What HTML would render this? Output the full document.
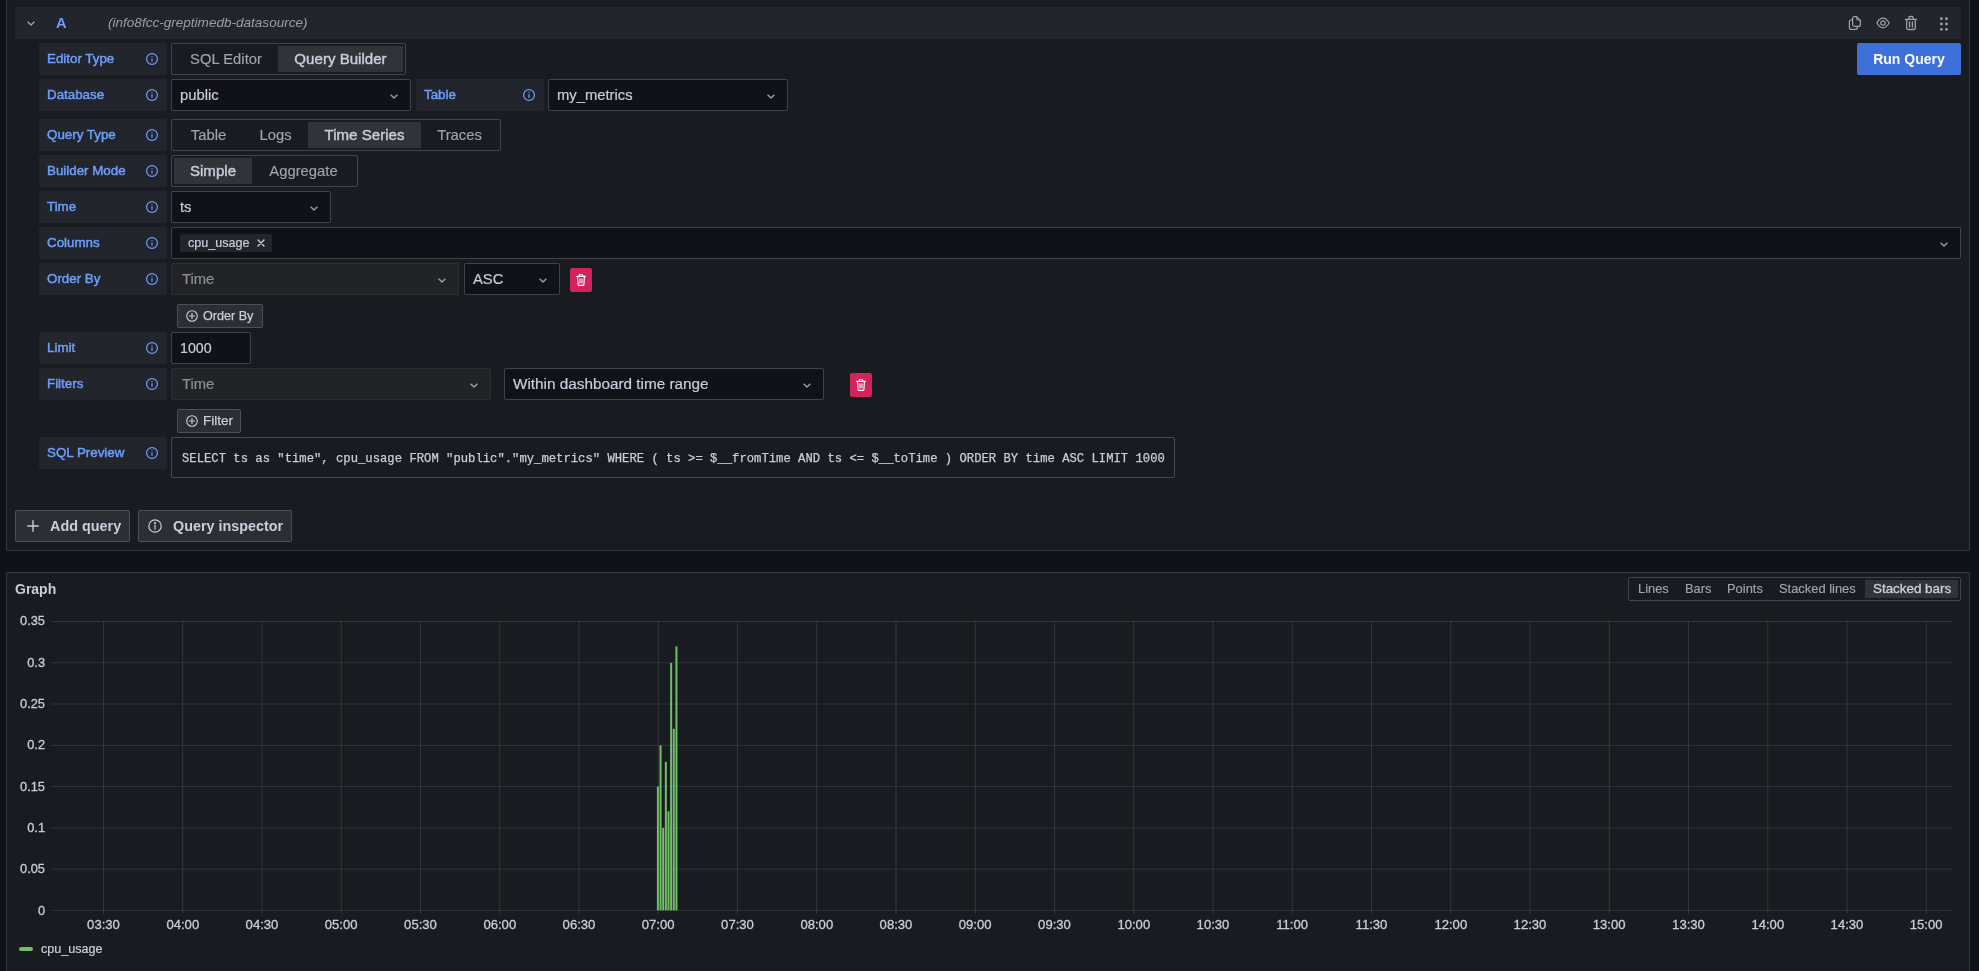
<!DOCTYPE html><html><head><meta charset="utf-8"><style>
*{box-sizing:border-box;margin:0;padding:0}
html,body{width:1979px;height:971px;overflow:hidden;background:#111217;font-family:"Liberation Sans",sans-serif;color:#ccccdc}
.abs{position:absolute}
.panel{position:absolute;background:#181b1f;border:1px solid rgba(204,204,220,0.17);border-radius:2px}
.lbl{position:absolute;left:39px;width:128px;height:32px;background:#22252b;border-radius:2px;color:#6e9fff;font-size:13.35px;line-height:32px;padding-left:8px;-webkit-text-stroke:0.45px #6e9fff;white-space:nowrap}
.lbl .ic{position:absolute;right:9px;top:10px}
.inp{position:absolute;height:32px;background:#111217;border:1px solid rgba(204,204,220,0.26);border-radius:2px;font-size:14.8px;line-height:30px;padding-left:8px;color:#ccccdc;white-space:nowrap;-webkit-text-stroke:0.2px currentColor}
.dis{background:#212327;border-color:rgba(204,204,220,0.07);color:#8e8e96;padding-left:10px}
.chev{position:absolute;top:12px}
.rg{position:absolute;height:32px;border:1px solid rgba(204,204,220,0.24);border-radius:2px;padding:2px}
.rb{position:absolute;top:2px;height:26px;line-height:26px;font-size:14.8px;color:#a3a3ad;white-space:nowrap;border-radius:2px;text-align:center;-webkit-text-stroke:0.15px currentColor}
.rb.on{border-radius:0;background:#313338;color:#ccccdc;font-size:15.1px;-webkit-text-stroke:0.4px #ccccdc}
.btn2{position:absolute;background:#2c2e33;border:1px solid rgba(204,204,220,0.22);border-radius:2px;color:#ccccdc;white-space:nowrap}
.del{position:absolute;width:22px;height:24px;background:#d3235c;border-radius:2px}
.mono{font-family:"Liberation Mono",monospace}
</style></head><body><div id="root" style="position:absolute;left:0;top:0;width:1979px;height:971px;will-change:transform">
<div class="panel" style="left:6px;top:-1px;width:1964px;height:552px"></div>
<div class="abs" style="left:15px;top:7px;width:1946px;height:32px;background:#22252b;border-radius:2px"></div>
<svg class="abs" style="left:25.8px;top:19.5px" width="10" height="7" viewBox="0 0 10 7"><path d="M1.9 2.1 L5 5.1 L8.1 2.1" fill="none" stroke="#a0a1ab" stroke-width="1.35" stroke-linecap="round" stroke-linejoin="round"/></svg>
<div class="abs" style="left:56px;top:7px;line-height:32px;font-size:14.6px;font-weight:700;color:#6e9fff">A</div>
<div class="abs" style="left:108px;top:7px;line-height:32px;font-size:13.55px;font-style:italic;color:#9d9da8">(info8fcc-greptimedb-datasource)</div>
<svg class="abs" style="left:1848px;top:15px" width="14" height="16" viewBox="0 0 14 16" fill="none" stroke="#a0a1ab" stroke-width="1.2" stroke-linejoin="round"><path d="M6.6 1.6 H8.6 L12.4 5.4 V9.4 A2 2 0 0 1 10.4 11.4 H6.6 A2 2 0 0 1 4.6 9.4 V3.6 A2 2 0 0 1 6.6 1.6 Z"/><path d="M8.8 2 V3.8 A1.2 1.2 0 0 0 10 5 H12"/><path d="M4.4 4.8 H3.4 A2 2 0 0 0 1.4 6.8 V12.4 A2 2 0 0 0 3.4 14.4 H7.4 A2 2 0 0 0 9.4 12.4 V11.6"/></svg>
<svg class="abs" style="left:1876px;top:17px" width="14" height="12" viewBox="0 0 14 12" fill="none" stroke="#a0a1ab" stroke-width="1.2"><path d="M0.9 6 C2.8 2.6 4.9 1.2 7 1.2 C9.1 1.2 11.2 2.6 13.1 6 C11.2 9.4 9.1 10.8 7 10.8 C4.9 10.8 2.8 9.4 0.9 6 Z"/><circle cx="7" cy="6" r="2.2"/></svg>
<svg class="abs" style="left:1904px;top:15px" width="14" height="16" viewBox="0 0 14 16" fill="none" stroke="#a0a1ab" stroke-width="1.3" stroke-linecap="round"><path d="M1.4 4.4 H12.6 M4.9 4.2 V2.7 Q4.9 1.5 6.1 1.5 H7.9 Q9.1 1.5 9.1 2.7 V4.2 M2.7 4.8 V13 A1.5 1.5 0 0 0 4.2 14.5 H9.8 A1.5 1.5 0 0 0 11.3 13 V4.8 M5.6 7 V12 M8.4 7 V12"/></svg>
<svg class="abs" style="left:1939px;top:17px" width="10" height="14" viewBox="0 0 10 14" fill="#a0a1ab"><circle cx="2.4" cy="1.7" r="1.4"/><circle cx="7.5" cy="1.7" r="1.4"/><circle cx="2.4" cy="6.9" r="1.4"/><circle cx="7.5" cy="6.9" r="1.4"/><circle cx="2.4" cy="12.3" r="1.4"/><circle cx="7.5" cy="12.3" r="1.4"/></svg>
<div class="abs" style="left:1857px;top:43px;width:104px;height:32px;background:#3d71d9;border-radius:2px;color:#fff;font-size:14px;font-weight:700;line-height:32px;text-align:center">Run Query</div>
<div class="lbl" style="top:43px;left:39px;width:128px">Editor Type<svg class="ic" width="12" height="12" viewBox="0 0 12 12"><circle cx="6" cy="6" r="5.4" fill="none" stroke="#6e9fff" stroke-width="1.2"/><rect x="5.4" y="5.3" width="1.2" height="3.5" fill="#6e9fff"/><circle cx="6" cy="3.6" r="0.7" fill="#6e9fff"/></svg></div>
<div class="rg" style="left:171px;top:43px;width:235px"></div>
<div class="rb" style="left:174px;top:46px;width:104px">SQL Editor</div>
<div class="rb on" style="left:278px;top:46px;width:125px">Query Builder</div>
<div class="lbl" style="top:79px;left:39px;width:128px">Database<svg class="ic" width="12" height="12" viewBox="0 0 12 12"><circle cx="6" cy="6" r="5.4" fill="none" stroke="#6e9fff" stroke-width="1.2"/><rect x="5.4" y="5.3" width="1.2" height="3.5" fill="#6e9fff"/><circle cx="6" cy="3.6" r="0.7" fill="#6e9fff"/></svg></div>
<div class="inp" style="left:171px;top:79px;width:240px">public</div>
<svg class="abs" style="left:389px;top:92.5px" width="10" height="7" viewBox="0 0 10 7"><path d="M1.9 2.1 L5 5.1 L8.1 2.1" fill="none" stroke="#a0a1ab" stroke-width="1.35" stroke-linecap="round" stroke-linejoin="round"/></svg>
<div class="lbl" style="top:79px;left:416px;width:128px">Table<svg class="ic" width="12" height="12" viewBox="0 0 12 12"><circle cx="6" cy="6" r="5.4" fill="none" stroke="#6e9fff" stroke-width="1.2"/><rect x="5.4" y="5.3" width="1.2" height="3.5" fill="#6e9fff"/><circle cx="6" cy="3.6" r="0.7" fill="#6e9fff"/></svg></div>
<div class="inp" style="left:548px;top:79px;width:240px">my_metrics</div>
<svg class="abs" style="left:766px;top:92.5px" width="10" height="7" viewBox="0 0 10 7"><path d="M1.9 2.1 L5 5.1 L8.1 2.1" fill="none" stroke="#a0a1ab" stroke-width="1.35" stroke-linecap="round" stroke-linejoin="round"/></svg>
<div class="lbl" style="top:119px;left:39px;width:128px">Query Type<svg class="ic" width="12" height="12" viewBox="0 0 12 12"><circle cx="6" cy="6" r="5.4" fill="none" stroke="#6e9fff" stroke-width="1.2"/><rect x="5.4" y="5.3" width="1.2" height="3.5" fill="#6e9fff"/><circle cx="6" cy="3.6" r="0.7" fill="#6e9fff"/></svg></div>
<div class="rg" style="left:171px;top:119px;width:330px"></div>
<div class="rb" style="left:174px;top:122px;width:69px">Table</div>
<div class="rb" style="left:243px;top:122px;width:65px">Logs</div>
<div class="rb on" style="left:308px;top:122px;width:113px">Time Series</div>
<div class="rb" style="left:421px;top:122px;width:77px">Traces</div>
<div class="lbl" style="top:155px;left:39px;width:128px">Builder Mode<svg class="ic" width="12" height="12" viewBox="0 0 12 12"><circle cx="6" cy="6" r="5.4" fill="none" stroke="#6e9fff" stroke-width="1.2"/><rect x="5.4" y="5.3" width="1.2" height="3.5" fill="#6e9fff"/><circle cx="6" cy="3.6" r="0.7" fill="#6e9fff"/></svg></div>
<div class="rg" style="left:171px;top:155px;width:187px"></div>
<div class="rb on" style="left:174px;top:158px;width:78px">Simple</div>
<div class="rb" style="left:252px;top:158px;width:103px">Aggregate</div>
<div class="lbl" style="top:191px;left:39px;width:128px">Time<svg class="ic" width="12" height="12" viewBox="0 0 12 12"><circle cx="6" cy="6" r="5.4" fill="none" stroke="#6e9fff" stroke-width="1.2"/><rect x="5.4" y="5.3" width="1.2" height="3.5" fill="#6e9fff"/><circle cx="6" cy="3.6" r="0.7" fill="#6e9fff"/></svg></div>
<div class="inp" style="left:171px;top:191px;width:160px">ts</div>
<svg class="abs" style="left:309px;top:204.5px" width="10" height="7" viewBox="0 0 10 7"><path d="M1.9 2.1 L5 5.1 L8.1 2.1" fill="none" stroke="#a0a1ab" stroke-width="1.35" stroke-linecap="round" stroke-linejoin="round"/></svg>
<div class="lbl" style="top:227px;left:39px;width:128px">Columns<svg class="ic" width="12" height="12" viewBox="0 0 12 12"><circle cx="6" cy="6" r="5.4" fill="none" stroke="#6e9fff" stroke-width="1.2"/><rect x="5.4" y="5.3" width="1.2" height="3.5" fill="#6e9fff"/><circle cx="6" cy="3.6" r="0.7" fill="#6e9fff"/></svg></div>
<div class="inp" style="left:171px;top:227px;width:1790px"></div>
<div class="abs" style="left:180px;top:234px;width:92px;height:18px;background:#22252b;border-radius:2px;font-size:12.6px;line-height:18px;padding-left:8px;color:#ccccdc;-webkit-text-stroke:0.2px #ccccdc">cpu_usage</div>
<svg class="abs" style="left:257px;top:239px" width="8" height="8" viewBox="0 0 8 8"><path d="M1 1 L7 7 M7 1 L1 7" stroke="#ccccdc" stroke-width="1.4" stroke-linecap="round"/></svg>
<svg class="abs" style="left:1939px;top:240.5px" width="10" height="7" viewBox="0 0 10 7"><path d="M1.9 2.1 L5 5.1 L8.1 2.1" fill="none" stroke="#a0a1ab" stroke-width="1.35" stroke-linecap="round" stroke-linejoin="round"/></svg>
<div class="lbl" style="top:263px;left:39px;width:128px">Order By<svg class="ic" width="12" height="12" viewBox="0 0 12 12"><circle cx="6" cy="6" r="5.4" fill="none" stroke="#6e9fff" stroke-width="1.2"/><rect x="5.4" y="5.3" width="1.2" height="3.5" fill="#6e9fff"/><circle cx="6" cy="3.6" r="0.7" fill="#6e9fff"/></svg></div>
<div class="inp dis" style="left:171px;top:263px;width:288px">Time</div>
<svg class="abs" style="left:437px;top:276.5px" width="10" height="7" viewBox="0 0 10 7"><path d="M1.9 2.1 L5 5.1 L8.1 2.1" fill="none" stroke="#a0a1ab" stroke-width="1.35" stroke-linecap="round" stroke-linejoin="round"/></svg>
<div class="inp" style="left:464px;top:263px;width:96px">ASC</div>
<svg class="abs" style="left:538px;top:276.5px" width="10" height="7" viewBox="0 0 10 7"><path d="M1.9 2.1 L5 5.1 L8.1 2.1" fill="none" stroke="#a0a1ab" stroke-width="1.35" stroke-linecap="round" stroke-linejoin="round"/></svg>
<div class="del" style="left:570px;top:268px"><svg class="abs" style="left:6px;top:6px" width="10" height="12" viewBox="0 0 10 12"><path d="M0.6 2.4 H9.4 M3.4 2.2 V1.6 A1.6 1.6 0 0 1 6.6 1.6 V2.2 M1.6 2.6 L2.1 10.6 A0.9 0.9 0 0 0 3 11.4 H7 A0.9 0.9 0 0 0 7.9 10.6 L8.4 2.6 M4 4.8 V9 M6 4.8 V9" fill="none" stroke="#fff" stroke-width="1.1" stroke-linecap="round"/></svg></div>
<div class="btn2" style="left:177px;top:304px;width:86px;height:24px;font-size:12.6px;line-height:22px;padding-left:25px;-webkit-text-stroke:0.25px #ccccdc">Order By</div>
<svg class="abs" style="left:186px;top:310px" width="12" height="12" viewBox="0 0 12 12" fill="none" stroke="#ccccdc" stroke-width="1.1"><circle cx="6" cy="6" r="5.3"/><path d="M6 3.4 V8.6 M3.4 6 H8.6" stroke-linecap="round"/></svg>
<div class="lbl" style="top:332px;left:39px;width:128px">Limit<svg class="ic" width="12" height="12" viewBox="0 0 12 12"><circle cx="6" cy="6" r="5.4" fill="none" stroke="#6e9fff" stroke-width="1.2"/><rect x="5.4" y="5.3" width="1.2" height="3.5" fill="#6e9fff"/><circle cx="6" cy="3.6" r="0.7" fill="#6e9fff"/></svg></div>
<div class="inp" style="left:171px;top:332px;width:80px;font-size:14.2px">1000</div>
<div class="lbl" style="top:368px;left:39px;width:128px">Filters<svg class="ic" width="12" height="12" viewBox="0 0 12 12"><circle cx="6" cy="6" r="5.4" fill="none" stroke="#6e9fff" stroke-width="1.2"/><rect x="5.4" y="5.3" width="1.2" height="3.5" fill="#6e9fff"/><circle cx="6" cy="3.6" r="0.7" fill="#6e9fff"/></svg></div>
<div class="inp dis" style="left:171px;top:368px;width:320px">Time</div>
<svg class="abs" style="left:469px;top:381.5px" width="10" height="7" viewBox="0 0 10 7"><path d="M1.9 2.1 L5 5.1 L8.1 2.1" fill="none" stroke="#a0a1ab" stroke-width="1.35" stroke-linecap="round" stroke-linejoin="round"/></svg>
<div class="inp" style="left:504px;top:368px;width:320px"><span style="font-size:15.3px">Within dashboard time range</span></div>
<svg class="abs" style="left:802px;top:381.5px" width="10" height="7" viewBox="0 0 10 7"><path d="M1.9 2.1 L5 5.1 L8.1 2.1" fill="none" stroke="#a0a1ab" stroke-width="1.35" stroke-linecap="round" stroke-linejoin="round"/></svg>
<div class="del" style="left:850px;top:373px"><svg class="abs" style="left:6px;top:6px" width="10" height="12" viewBox="0 0 10 12"><path d="M0.6 2.4 H9.4 M3.4 2.2 V1.6 A1.6 1.6 0 0 1 6.6 1.6 V2.2 M1.6 2.6 L2.1 10.6 A0.9 0.9 0 0 0 3 11.4 H7 A0.9 0.9 0 0 0 7.9 10.6 L8.4 2.6 M4 4.8 V9 M6 4.8 V9" fill="none" stroke="#fff" stroke-width="1.1" stroke-linecap="round"/></svg></div>
<div class="btn2" style="left:177px;top:409px;width:64px;height:24px;font-size:12.6px;line-height:22px;padding-left:25px;-webkit-text-stroke:0.25px #ccccdc"><span style="font-size:13.5px">Filter</span></div>
<svg class="abs" style="left:186px;top:415px" width="12" height="12" viewBox="0 0 12 12" fill="none" stroke="#ccccdc" stroke-width="1.1"><circle cx="6" cy="6" r="5.3"/><path d="M6 3.4 V8.6 M3.4 6 H8.6" stroke-linecap="round"/></svg>
<div class="lbl" style="top:437px;left:39px;width:128px">SQL Preview<svg class="ic" width="12" height="12" viewBox="0 0 12 12"><circle cx="6" cy="6" r="5.4" fill="none" stroke="#6e9fff" stroke-width="1.2"/><rect x="5.4" y="5.3" width="1.2" height="3.5" fill="#6e9fff"/><circle cx="6" cy="3.6" r="0.7" fill="#6e9fff"/></svg></div>
<div class="abs mono" style="left:171px;top:437px;width:1004px;height:41px;border:1px solid rgba(204,204,220,0.26);border-radius:2px;font-size:12.2px;letter-spacing:0.021px;line-height:42px;padding-left:10px;color:#ccccdc;white-space:pre;-webkit-text-stroke:0.25px #ccccdc">SELECT ts as "time", cpu_usage FROM "public"."my_metrics" WHERE ( ts &gt;= $__fromTime AND ts &lt;= $__toTime ) ORDER BY time ASC LIMIT 1000</div>
<div class="btn2" style="left:15px;top:510px;width:115px;height:32px;font-size:14.4px;font-weight:700;line-height:30px;padding-left:34px">Add query</div>
<svg class="abs" style="left:27px;top:520px" width="12" height="12" viewBox="0 0 12 12"><path d="M6 0.8 V11.2 M0.8 6 H11.2" stroke="#ccccdc" stroke-width="1.4" stroke-linecap="round"/></svg>
<div class="btn2" style="left:138px;top:510px;width:154px;height:32px;font-size:14.35px;font-weight:700;line-height:30px;padding-left:34px">Query inspector</div>
<svg class="abs" style="left:148px;top:519px" width="14" height="14" viewBox="0 0 14 14" fill="none" stroke="#ccccdc" stroke-width="1.2"><circle cx="7" cy="7" r="6.2"/><path d="M7 6.2 V10.2" stroke-linecap="round"/><circle cx="7" cy="4.1" r="0.5" fill="#ccccdc"/></svg>
<div class="panel" style="left:6px;top:572px;width:1964px;height:420px"></div>
<div class="abs" style="left:15px;top:581px;font-size:14px;font-weight:700;line-height:17px;color:#ccccdc">Graph</div>
<div class="abs" style="left:1628px;top:577px;width:333px;height:24px;border:1px solid rgba(204,204,220,0.24);border-radius:2px"></div>
<div class="abs" style="left:1865px;top:580px;width:93px;height:18px;background:#313338"></div>
<div class="abs" style="left:1638px;top:580px;line-height:18px;font-size:12.9px;white-space:nowrap;color:#a3a3ad;-webkit-text-stroke:0.15px #a3a3ad">Lines</div>
<div class="abs" style="left:1685px;top:580px;line-height:18px;font-size:12.9px;white-space:nowrap;color:#a3a3ad;-webkit-text-stroke:0.15px #a3a3ad">Bars</div>
<div class="abs" style="left:1727px;top:580px;line-height:18px;font-size:12.9px;white-space:nowrap;color:#a3a3ad;-webkit-text-stroke:0.15px #a3a3ad">Points</div>
<div class="abs" style="left:1779px;top:580px;line-height:18px;font-size:12.9px;white-space:nowrap;color:#a3a3ad;-webkit-text-stroke:0.15px #a3a3ad">Stacked lines</div>
<div class="abs" style="left:1873px;top:580px;line-height:18px;font-size:12.9px;white-space:nowrap;color:#ccccdc;-webkit-text-stroke:0.35px #ccccdc;font-size:13.4px">Stacked bars</div>
<svg class="abs" style="left:0;top:0" width="1979" height="971"><line x1="51" y1="621.50" x2="1953" y2="621.50" stroke="rgba(204,204,220,0.14)" stroke-width="1"/><line x1="51" y1="662.77" x2="1953" y2="662.77" stroke="rgba(204,204,220,0.14)" stroke-width="1"/><line x1="51" y1="704.04" x2="1953" y2="704.04" stroke="rgba(204,204,220,0.14)" stroke-width="1"/><line x1="51" y1="745.31" x2="1953" y2="745.31" stroke="rgba(204,204,220,0.14)" stroke-width="1"/><line x1="51" y1="786.58" x2="1953" y2="786.58" stroke="rgba(204,204,220,0.14)" stroke-width="1"/><line x1="51" y1="827.85" x2="1953" y2="827.85" stroke="rgba(204,204,220,0.14)" stroke-width="1"/><line x1="51" y1="869.12" x2="1953" y2="869.12" stroke="rgba(204,204,220,0.14)" stroke-width="1"/><line x1="51" y1="910.39" x2="1953" y2="910.39" stroke="rgba(204,204,220,0.14)" stroke-width="1"/><line x1="103.50" y1="621" x2="103.50" y2="914" stroke="rgba(204,204,220,0.14)" stroke-width="1"/><line x1="182.75" y1="621" x2="182.75" y2="914" stroke="rgba(204,204,220,0.14)" stroke-width="1"/><line x1="262.00" y1="621" x2="262.00" y2="914" stroke="rgba(204,204,220,0.14)" stroke-width="1"/><line x1="341.25" y1="621" x2="341.25" y2="914" stroke="rgba(204,204,220,0.14)" stroke-width="1"/><line x1="420.50" y1="621" x2="420.50" y2="914" stroke="rgba(204,204,220,0.14)" stroke-width="1"/><line x1="499.75" y1="621" x2="499.75" y2="914" stroke="rgba(204,204,220,0.14)" stroke-width="1"/><line x1="579.00" y1="621" x2="579.00" y2="914" stroke="rgba(204,204,220,0.14)" stroke-width="1"/><line x1="658.25" y1="621" x2="658.25" y2="914" stroke="rgba(204,204,220,0.14)" stroke-width="1"/><line x1="737.50" y1="621" x2="737.50" y2="914" stroke="rgba(204,204,220,0.14)" stroke-width="1"/><line x1="816.75" y1="621" x2="816.75" y2="914" stroke="rgba(204,204,220,0.14)" stroke-width="1"/><line x1="896.00" y1="621" x2="896.00" y2="914" stroke="rgba(204,204,220,0.14)" stroke-width="1"/><line x1="975.25" y1="621" x2="975.25" y2="914" stroke="rgba(204,204,220,0.14)" stroke-width="1"/><line x1="1054.50" y1="621" x2="1054.50" y2="914" stroke="rgba(204,204,220,0.14)" stroke-width="1"/><line x1="1133.75" y1="621" x2="1133.75" y2="914" stroke="rgba(204,204,220,0.14)" stroke-width="1"/><line x1="1213.00" y1="621" x2="1213.00" y2="914" stroke="rgba(204,204,220,0.14)" stroke-width="1"/><line x1="1292.25" y1="621" x2="1292.25" y2="914" stroke="rgba(204,204,220,0.14)" stroke-width="1"/><line x1="1371.50" y1="621" x2="1371.50" y2="914" stroke="rgba(204,204,220,0.14)" stroke-width="1"/><line x1="1450.75" y1="621" x2="1450.75" y2="914" stroke="rgba(204,204,220,0.14)" stroke-width="1"/><line x1="1530.00" y1="621" x2="1530.00" y2="914" stroke="rgba(204,204,220,0.14)" stroke-width="1"/><line x1="1609.25" y1="621" x2="1609.25" y2="914" stroke="rgba(204,204,220,0.14)" stroke-width="1"/><line x1="1688.50" y1="621" x2="1688.50" y2="914" stroke="rgba(204,204,220,0.14)" stroke-width="1"/><line x1="1767.75" y1="621" x2="1767.75" y2="914" stroke="rgba(204,204,220,0.14)" stroke-width="1"/><line x1="1847.00" y1="621" x2="1847.00" y2="914" stroke="rgba(204,204,220,0.14)" stroke-width="1"/><line x1="1926.25" y1="621" x2="1926.25" y2="914" stroke="rgba(204,204,220,0.14)" stroke-width="1"/><rect x="656.90" y="786.59" width="2" height="123.81" fill="#73bf69"/><rect x="659.55" y="745.32" width="2" height="165.08" fill="#73bf69"/><rect x="662.20" y="827.86" width="2" height="82.54" fill="#73bf69"/><rect x="664.85" y="761.83" width="2" height="148.57" fill="#73bf69"/><rect x="667.50" y="811.35" width="2" height="99.05" fill="#73bf69"/><rect x="670.15" y="662.78" width="2" height="247.62" fill="#73bf69"/><rect x="672.80" y="728.81" width="2" height="181.59" fill="#73bf69"/><rect x="675.45" y="646.27" width="2" height="264.13" fill="#73bf69"/></svg>
<div class="abs" style="left:0;width:45px;text-align:right;top:613px;line-height:16px;font-size:12.8px;color:#ccccdc;-webkit-text-stroke:0.3px #ccccdc">0.35</div>
<div class="abs" style="left:0;width:45px;text-align:right;top:655px;line-height:16px;font-size:12.8px;color:#ccccdc;-webkit-text-stroke:0.3px #ccccdc">0.3</div>
<div class="abs" style="left:0;width:45px;text-align:right;top:696px;line-height:16px;font-size:12.8px;color:#ccccdc;-webkit-text-stroke:0.3px #ccccdc">0.25</div>
<div class="abs" style="left:0;width:45px;text-align:right;top:737px;line-height:16px;font-size:12.8px;color:#ccccdc;-webkit-text-stroke:0.3px #ccccdc">0.2</div>
<div class="abs" style="left:0;width:45px;text-align:right;top:779px;line-height:16px;font-size:12.8px;color:#ccccdc;-webkit-text-stroke:0.3px #ccccdc">0.15</div>
<div class="abs" style="left:0;width:45px;text-align:right;top:820px;line-height:16px;font-size:12.8px;color:#ccccdc;-webkit-text-stroke:0.3px #ccccdc">0.1</div>
<div class="abs" style="left:0;width:45px;text-align:right;top:861px;line-height:16px;font-size:12.8px;color:#ccccdc;-webkit-text-stroke:0.3px #ccccdc">0.05</div>
<div class="abs" style="left:0;width:45px;text-align:right;top:903px;line-height:16px;font-size:12.8px;color:#ccccdc;-webkit-text-stroke:0.3px #ccccdc">0</div>
<div class="abs" style="left:63.5px;width:80px;text-align:center;top:917px;line-height:16px;font-size:13.1px;color:#ccccdc;-webkit-text-stroke:0.3px #ccccdc">03:30</div>
<div class="abs" style="left:142.8px;width:80px;text-align:center;top:917px;line-height:16px;font-size:13.1px;color:#ccccdc;-webkit-text-stroke:0.3px #ccccdc">04:00</div>
<div class="abs" style="left:222.0px;width:80px;text-align:center;top:917px;line-height:16px;font-size:13.1px;color:#ccccdc;-webkit-text-stroke:0.3px #ccccdc">04:30</div>
<div class="abs" style="left:301.2px;width:80px;text-align:center;top:917px;line-height:16px;font-size:13.1px;color:#ccccdc;-webkit-text-stroke:0.3px #ccccdc">05:00</div>
<div class="abs" style="left:380.5px;width:80px;text-align:center;top:917px;line-height:16px;font-size:13.1px;color:#ccccdc;-webkit-text-stroke:0.3px #ccccdc">05:30</div>
<div class="abs" style="left:459.8px;width:80px;text-align:center;top:917px;line-height:16px;font-size:13.1px;color:#ccccdc;-webkit-text-stroke:0.3px #ccccdc">06:00</div>
<div class="abs" style="left:539.0px;width:80px;text-align:center;top:917px;line-height:16px;font-size:13.1px;color:#ccccdc;-webkit-text-stroke:0.3px #ccccdc">06:30</div>
<div class="abs" style="left:618.2px;width:80px;text-align:center;top:917px;line-height:16px;font-size:13.1px;color:#ccccdc;-webkit-text-stroke:0.3px #ccccdc">07:00</div>
<div class="abs" style="left:697.5px;width:80px;text-align:center;top:917px;line-height:16px;font-size:13.1px;color:#ccccdc;-webkit-text-stroke:0.3px #ccccdc">07:30</div>
<div class="abs" style="left:776.8px;width:80px;text-align:center;top:917px;line-height:16px;font-size:13.1px;color:#ccccdc;-webkit-text-stroke:0.3px #ccccdc">08:00</div>
<div class="abs" style="left:856.0px;width:80px;text-align:center;top:917px;line-height:16px;font-size:13.1px;color:#ccccdc;-webkit-text-stroke:0.3px #ccccdc">08:30</div>
<div class="abs" style="left:935.2px;width:80px;text-align:center;top:917px;line-height:16px;font-size:13.1px;color:#ccccdc;-webkit-text-stroke:0.3px #ccccdc">09:00</div>
<div class="abs" style="left:1014.5px;width:80px;text-align:center;top:917px;line-height:16px;font-size:13.1px;color:#ccccdc;-webkit-text-stroke:0.3px #ccccdc">09:30</div>
<div class="abs" style="left:1093.8px;width:80px;text-align:center;top:917px;line-height:16px;font-size:13.1px;color:#ccccdc;-webkit-text-stroke:0.3px #ccccdc">10:00</div>
<div class="abs" style="left:1173.0px;width:80px;text-align:center;top:917px;line-height:16px;font-size:13.1px;color:#ccccdc;-webkit-text-stroke:0.3px #ccccdc">10:30</div>
<div class="abs" style="left:1252.2px;width:80px;text-align:center;top:917px;line-height:16px;font-size:13.1px;color:#ccccdc;-webkit-text-stroke:0.3px #ccccdc">11:00</div>
<div class="abs" style="left:1331.5px;width:80px;text-align:center;top:917px;line-height:16px;font-size:13.1px;color:#ccccdc;-webkit-text-stroke:0.3px #ccccdc">11:30</div>
<div class="abs" style="left:1410.8px;width:80px;text-align:center;top:917px;line-height:16px;font-size:13.1px;color:#ccccdc;-webkit-text-stroke:0.3px #ccccdc">12:00</div>
<div class="abs" style="left:1490.0px;width:80px;text-align:center;top:917px;line-height:16px;font-size:13.1px;color:#ccccdc;-webkit-text-stroke:0.3px #ccccdc">12:30</div>
<div class="abs" style="left:1569.2px;width:80px;text-align:center;top:917px;line-height:16px;font-size:13.1px;color:#ccccdc;-webkit-text-stroke:0.3px #ccccdc">13:00</div>
<div class="abs" style="left:1648.5px;width:80px;text-align:center;top:917px;line-height:16px;font-size:13.1px;color:#ccccdc;-webkit-text-stroke:0.3px #ccccdc">13:30</div>
<div class="abs" style="left:1727.8px;width:80px;text-align:center;top:917px;line-height:16px;font-size:13.1px;color:#ccccdc;-webkit-text-stroke:0.3px #ccccdc">14:00</div>
<div class="abs" style="left:1807.0px;width:80px;text-align:center;top:917px;line-height:16px;font-size:13.1px;color:#ccccdc;-webkit-text-stroke:0.3px #ccccdc">14:30</div>
<div class="abs" style="left:1886.2px;width:80px;text-align:center;top:917px;line-height:16px;font-size:13.1px;color:#ccccdc;-webkit-text-stroke:0.3px #ccccdc">15:00</div>
<div class="abs" style="left:19px;top:947px;width:14px;height:4px;background:#73bf69;border-radius:2px"></div>
<div class="abs" style="left:41px;top:941px;line-height:16px;font-size:12.6px;color:#ccccdc;-webkit-text-stroke:0.2px #ccccdc">cpu_usage</div>
</div></body></html>
